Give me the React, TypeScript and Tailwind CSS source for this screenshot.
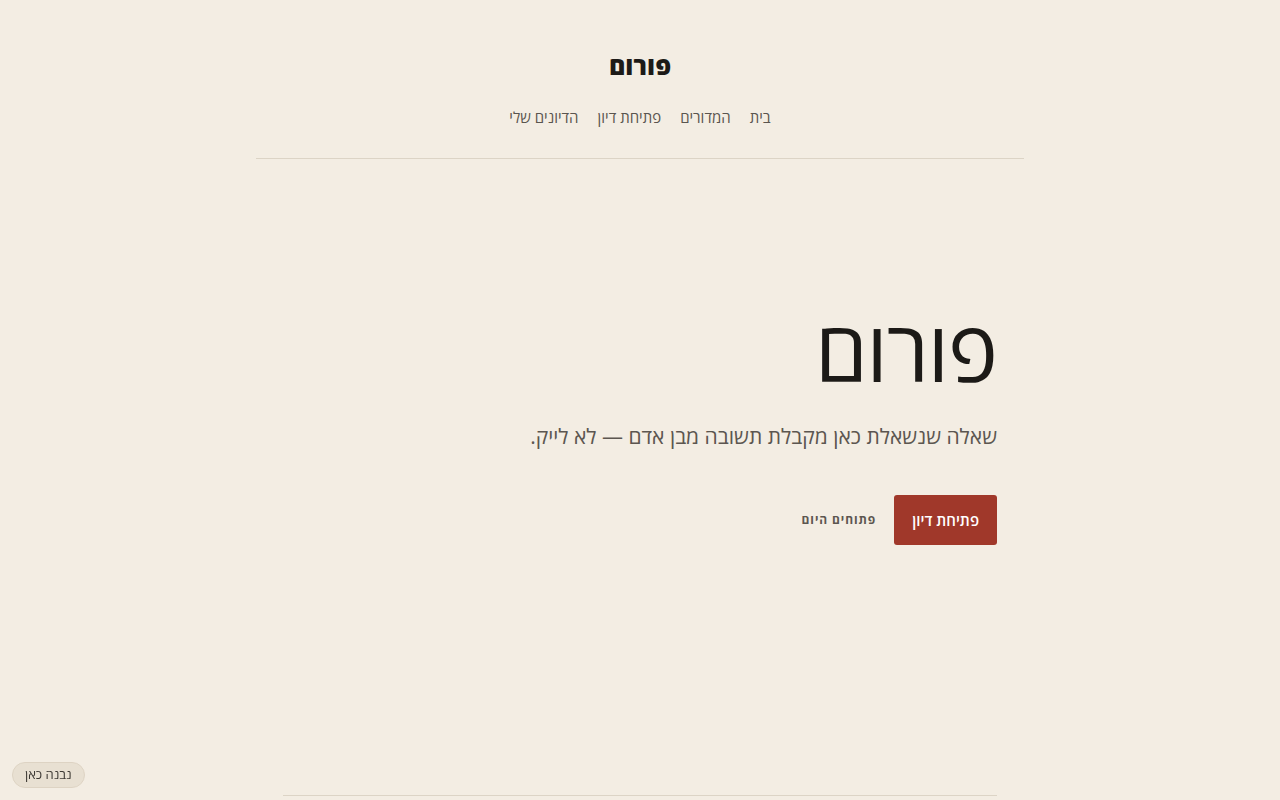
export default function App() {
  const nav = ['בית', 'המדורים', 'פתיחת דיון', 'הדיונים שלי'];
  return (
    <div
      dir="rtl"
      className="min-h-screen bg-[#f3ede3] text-[#1c1a17] relative"
      style={{ fontFamily: '"Open Sans", "DejaVu Sans", sans-serif' }}
    >
      {/* Header */}
      <header className="max-w-[768px] mx-auto border-b border-[#dcd4c6]">
        <div className="pt-[46px] pb-[30px] flex flex-col items-center">
          <h1 className="text-[25px] font-extrabold leading-[38px]">פורום</h1>
          <nav className="mt-[22px] flex gap-[19px] text-[15px] text-[#5a554f]">
            {nav.map((n) => (
              <a key={n} href="#" className="leading-[22px]">
                {n}
              </a>
            ))}
          </nav>
        </div>
      </header>

      {/* Hero */}
      <main className="max-w-[714px] mx-auto">
        <section className="pt-[142px] pb-[250px]">
          <h2 className="text-[84px] font-normal leading-[98px] tracking-[-1px]">פורום</h2>
          <p className="mt-[22px] text-[21px] text-[#5c5650] leading-[30px]">
            שאלה שנשאלת כאן מקבלת תשובה מבן אדם — לא לייק.
          </p>
          <div className="mt-[44px] flex items-center gap-[18px]">
            <button className="h-[50px] px-[18px] bg-[#a0382a] text-white text-[15px] font-semibold rounded-[3px]">
              פתיחת דיון
            </button>
            <button className="text-[12px] font-bold tracking-[0.9px] text-[#5c5650]">
              פתוחים היום
            </button>
          </div>
        </section>
        <div className="border-t border-[#dcd4c6]" />
      </main>

      {/* Badge */}
      <div className="fixed left-[12px] bottom-[12px] px-[12px] h-[26px] flex items-center rounded-full bg-[#e8e0d2] border border-[#ddd3c3] text-[13px] text-[#3d3934]">
        נבנה כאן
      </div>
    </div>
  );
}
